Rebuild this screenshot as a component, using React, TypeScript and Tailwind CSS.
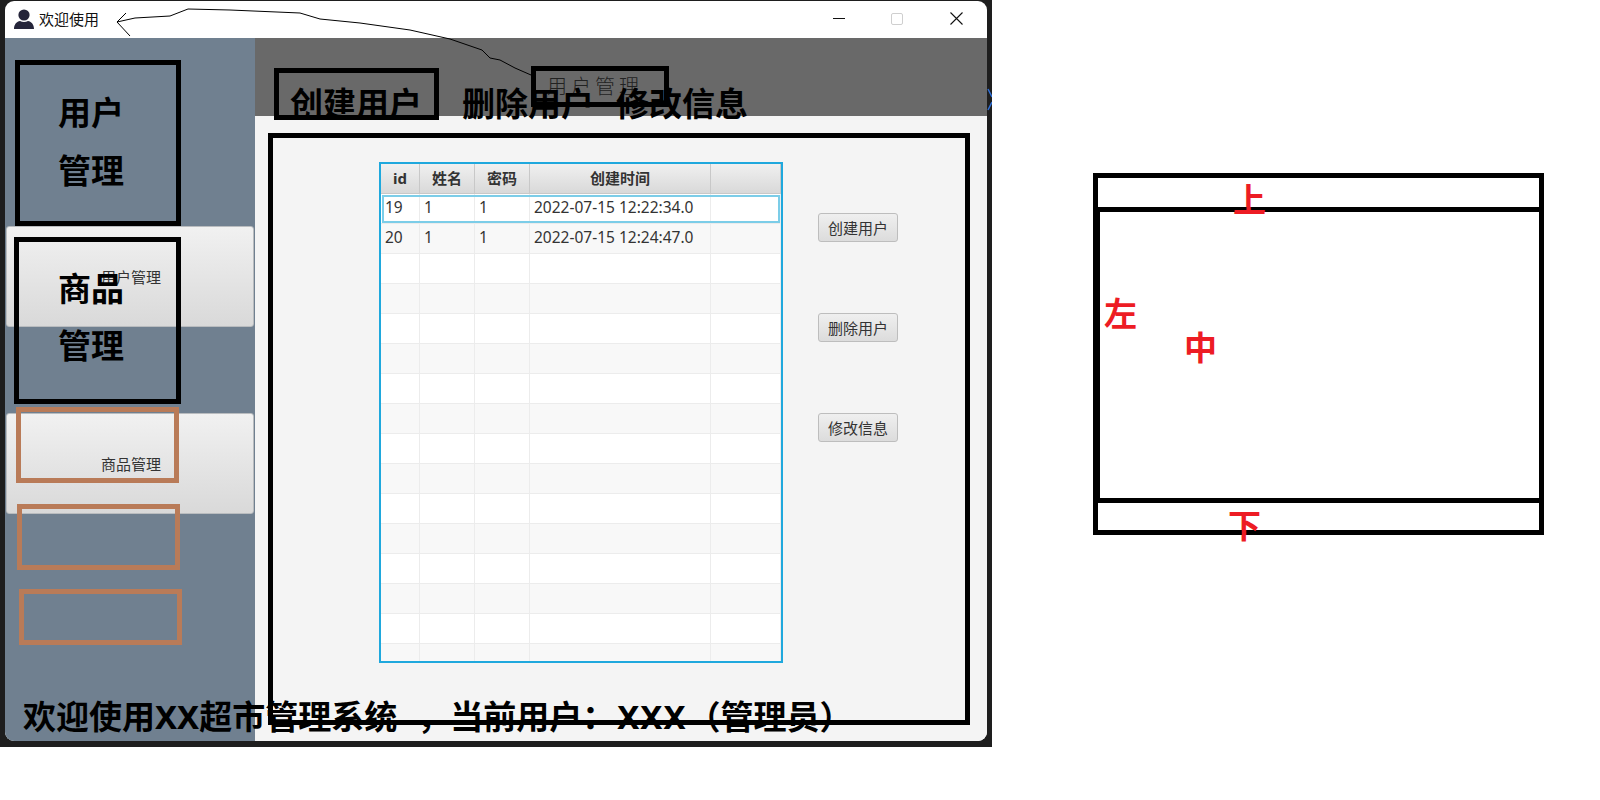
import React from 'react';

const FONT = "font-['Noto_Sans','Noto_Sans_CJK_SC',sans-serif]";

const rows = [
  { id: '19', name: '1', pwd: '1', time: '2022-07-15 12:22:34.0' },
  { id: '20', name: '1', pwd: '1', time: '2022-07-15 12:24:47.0' },
  ...Array.from({ length: 15 }, () => ({ id: '', name: '', pwd: '', time: '' })),
];

const SideButton = ({ label }: { label: string }) => (
  <div className="relative mx-px h-[101px] rounded-[3px] border border-[#b9bcbf] bg-gradient-to-b from-[#f1f1f1] to-[#d9d9d9]">
    <span className="absolute bottom-[39px] right-[92px] text-[15px] leading-[20px] text-[#333]">{label}</span>
  </div>
);

const ActionButton = ({ label }: { label: string }) => (
  <button className="h-[29px] w-[80px] rounded-[3px] border border-[#bdbdbd] bg-gradient-to-b from-[#efefef] to-[#dcdcdc] text-[15px] leading-[20px] text-[#333]">
    {label}
  </button>
);

const Table = () => (
  <div className="h-[501px] w-[404px] overflow-hidden border-2 border-[#1fa8dd] bg-white">
    <div className="grid h-[30px] grid-cols-[39px_55px_55px_181px_70px] bg-gradient-to-b from-[#f0f0f0] to-[#d8d8d8] text-[15px] font-bold text-[#333]">
      {['id', '姓名', '密码', '创建时间', ''].map((h, i) => (
        <div key={i} className="flex items-center justify-center border-r border-b border-[#c8c8c8]">
          {h}
        </div>
      ))}
    </div>
    {rows.map((r, i) => (
      <div
        key={i}
        className={
          i % 2 === 0
            ? 'relative grid h-[30px] grid-cols-[39px_55px_55px_181px_70px] bg-white text-[15.5px] text-[#333]'
            : 'relative grid h-[30px] grid-cols-[39px_55px_55px_181px_70px] bg-[#f8f8f8] text-[15.5px] text-[#333]'
        }
      >
        {[r.id, r.name, r.pwd, r.time, ''].map((c, j) => (
          <div key={j} className="flex items-center border-r border-b border-[#ececec] pb-[2px] pl-[4px]">
            {c}
          </div>
        ))}
        {i === 0 && <div className="absolute inset-x-[1px] top-[1px] h-[28px] border-2 border-[#7ccde8]" />}
      </div>
    ))}
  </div>
);

const Window = () => (
  <div className="flex h-[740px] w-[982px] flex-col overflow-hidden rounded-[9px] bg-white">
    {/* title bar */}
    <div className="flex h-[37px] shrink-0 items-center pb-[2px]">
      <svg width="20" height="20" viewBox="0 0 20 20" className="ml-[9px]">
        <circle cx="10" cy="6" r="5.6" fill="#25253a" />
        <path d="M0 20c0-5 3-7.5 6-8 2.4 1.2 5.6 1.2 8 0 3 .5 6 3 6 8z" fill="#25253a" />
      </svg>
      <span className="ml-[5px] text-[15px] leading-[20px] text-[#111]">欢迎使用</span>
      <div className="ml-auto flex items-center">
        <div className="h-px w-[12px] bg-[#111]" />
        <div className="ml-[46px] h-[12px] w-[12px] rounded-[2px] border border-[#cfcfcf]" />
        <svg width="13" height="13" viewBox="0 0 13 13" className="ml-[47px] mr-[24px]">
          <path d="M.5.5l12 12M12.5.5l-12 12" stroke="#111" strokeWidth="1.1" fill="none" />
        </svg>
      </div>
    </div>

    <div className="flex min-h-0 flex-1">
      {/* left */}
      <div className="flex w-[250px] shrink-0 flex-col gap-[86px] bg-[#708090] pt-[188px]">
        <SideButton label="用户管理" />
        <SideButton label="商品管理" />
      </div>

      {/* right */}
      <div className="flex min-w-0 flex-1 flex-col bg-[#f4f4f4]">
        <div className="h-[78px] shrink-0 bg-[#696969]" />
        <div className="flex pl-[124px] pt-[46px]">
          <Table />
          <div className="ml-[35px] mt-[51px] flex flex-col gap-[71px]">
            <ActionButton label="创建用户" />
            <ActionButton label="删除用户" />
            <ActionButton label="修改信息" />
          </div>
        </div>
      </div>
    </div>
  </div>
);

// hand drawn marks that were pasted over the screenshot
const Annotations = () => (
  <>
    {/* boxes over the left column */}
    <div className="absolute left-[14px] top-[60px] flex flex-col items-start text-[33px] font-bold leading-[44px] text-black">
      <div className="ml-px flex h-[166px] w-[166px] flex-col gap-[14px] border-[5px] border-black pl-[38px] pt-[26px]">
        <span>用户</span>
        <span>管理</span>
      </div>
      <div className="mt-[11px] flex h-[167px] w-[167px] flex-col gap-[13px] border-[5px] border-black pl-[39px] pt-[25px]">
        <span>商品</span>
        <span>管理</span>
      </div>
      <div className="ml-[2px] mt-[3px] h-[76px] w-[163px] border-[5px] border-[#b97b58]" />
      <div className="ml-[3px] mt-[21px] h-[66px] w-[163px] border-[5px] border-[#b97b58]" />
      <div className="ml-[5px] mt-[19px] h-[56px] w-[163px] border-[5px] border-[#b97b58]" />
    </div>

    <div className="absolute left-[274px] top-[68px] h-[52px] w-[165px] border-[5px] border-black" />
    <div className="absolute left-[531px] top-[66px] flex h-[41px] w-[138px] items-center border-[5px] border-black pl-[11px] text-[20px] font-light tracking-[4px] text-[#222]">
      用户管理
    </div>
    <div className="absolute left-[268px] top-[133px] h-[592px] w-[702px] border-[5px] border-black" />

    {/* big labels over the header */}
    <div className="absolute left-[290px] top-[82px] flex text-[33px] font-bold leading-[44px] text-black">
      <span>创建用户</span>
      <span className="ml-[40px]">删除用户</span>
      <span className="ml-[22px]">修改信息</span>
    </div>

    <div className="absolute left-[23px] top-[695px] flex whitespace-pre text-[33px] font-bold leading-[44px] text-black">
      <span>欢迎使用XX超市管理系统</span>
      <span className="ml-[20px]">，</span>
      <span>当前用户：</span>
      <span className="ml-[2px] tracking-[1px]">XXX</span>
      <span className="ml-[1px]">（管理员）</span>
    </div>

    <svg width="992" height="120" className="absolute left-0 top-0">
      <path
        d="M126 13L117 22L130 36M117 22L135 18L170 16L188 9L230 10L300 13L320 19L360 23L410 30L450 39L482 50L490 58L500 60L515 68L531 75"
        fill="none"
        stroke="#000"
        strokeWidth="1"
      />
      <path d="M988 89L992 97M988 110L992 102" fill="none" stroke="#2f6fd8" strokeWidth="1.5" />
    </svg>
  </>
);

const LayoutSketch = () => (
  <div className="relative mt-[173px] ml-[101px] h-[362px] w-[451px] border-[5px] border-black text-[33px] font-bold leading-[44px] text-[#ed1c24]">
    <div className="absolute inset-x-0 top-[29px] h-[5px] bg-black" />
    <div className="absolute inset-x-0 top-[320px] h-[5px] bg-black" />
    <div className="absolute bottom-[31px] left-0 top-[34px] w-[2px] bg-black" />
    <span className="absolute left-[135px] top-0">上</span>
    <span className="absolute left-[6px] top-[114px]">左</span>
    <span className="absolute left-[86px] top-[148px]">中</span>
    <span className="absolute left-[130px] top-[326px]">下</span>
  </div>
);

const App: React.FC = () => {
  return (
    <div className={`${FONT} flex h-[800px] w-[1600px] items-start overflow-hidden bg-white`}>
      <div className="relative h-[747px] w-[992px] shrink-0 bg-[#1e1e1e] pl-[5px] pt-px">
        <Window />
        <Annotations />
      </div>
      <LayoutSketch />
    </div>
  );
};

export default App;
